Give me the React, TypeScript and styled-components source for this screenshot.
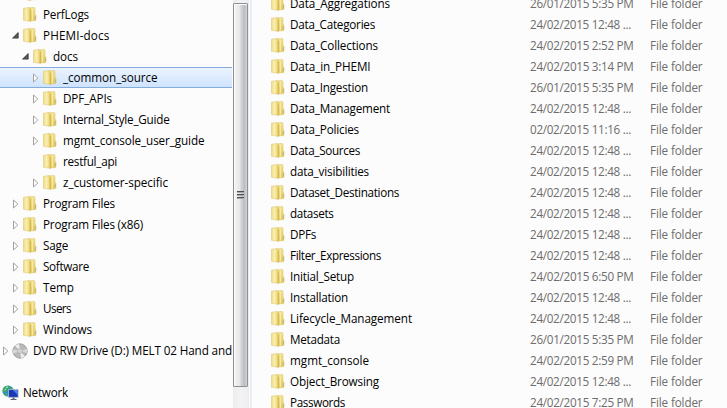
import React, { useLayoutEffect, useRef, useState } from 'react';
import styled, { createGlobalStyle } from 'styled-components';

const Global = createGlobalStyle`
  * { box-sizing: border-box; }
  body { margin: 0; background: #fcfcfc; font-family: "Open Sans", "Noto Sans", sans-serif; font-size: 11.7px; color: #000; }
`;

const Explorer = styled.div`
  display: flex;
  width: 727px;
  height: 408px;
  overflow: hidden;
  background: #fcfcfc;
`;

const Tree = styled.div`
  width: 233px;
  flex: none;
  margin-top: -17px;
  overflow: hidden;
`;

const TreeRow = styled.div<{ $level: number; $selected?: boolean }>`
  display: flex;
  align-items: center;
  height: 21px;
  width: 232px;
  padding-left: ${(p) => p.$level * 10}px;
  white-space: nowrap;
  border-top: 1px solid ${(p) => (p.$selected ? '#84acdd' : 'transparent')};
  border-bottom: 1px solid ${(p) => (p.$selected ? '#84acdd' : 'transparent')};
  background: ${(p) => (p.$selected ? 'linear-gradient(#ebf4fe, #cfe3fd)' : 'transparent')};
`;

const ArrowSlot = styled.span`
  display: flex;
  width: 12px;
  flex: none;
  padding-left: 2px;
`;

const IconSlot = styled.span<{ $inset?: boolean }>`
  display: flex;
  width: 21px;
  flex: none;
  padding-left: ${(p) => (p.$inset ? 1 : 0)}px;
`;

const Spacer = styled.div`
  height: 21px;
`;

const Track = styled.div`
  width: 16px;
  flex: none;
  padding-top: 3px;
  background: linear-gradient(90deg, #ececee, #f3f3f4 50%, #eeeef0);
`;

const Thumb = styled.div`
  display: flex;
  align-items: center;
  justify-content: center;
  width: 15px;
  height: 384px;
  border: 1px solid #8f9094;
  border-radius: 1px;
  box-shadow: inset 1px 1px 0 #fafafa;
  background: linear-gradient(90deg, #f4f4f4 0, #e7e7e9 42%, #cfd0d4 58%, #bdbec4 80%, #d2d3d6 100%);
`;

const Grip = styled.div`
  display: grid;
  gap: 1px;
`;

const GripLine = styled.div`
  width: 7px;
  height: 2px;
  border-top: 1px solid #4b4c50;
  border-bottom: 1px solid #a9aaae;
`;

const Splitter = styled.div`
  width: 3px;
  flex: none;
  border-left: 1px solid #fafbfd;
  border-right: 1px solid #eceff8;
  background: #e6ebf6;
`;

const List = styled.div`
  flex: 1;
  margin-top: -7px;
  padding-left: 18px;
`;

const ListRow = styled.div`
  display: grid;
  grid-template-columns: 20px 240px 120px 1fr;
  align-items: center;
  height: 21px;
  white-space: nowrap;
`;

const ListIcon = styled.span`
  display: flex;
  padding-left: 1px;
`;

const Text = styled.span<{ $muted?: boolean }>`
  display: block;
  justify-self: start;
  line-height: 19px;
  color: ${(p) => (p.$muted ? '#6d6d6d' : '#000')};
`;

/* Tightens or loosens tracking so a label takes the given width. */
function Label({ text, width, muted }: { text: string; width: number; muted?: boolean }) {
  const ref = useRef<HTMLSpanElement>(null);
  const [spacing, setSpacing] = useState(0);
  useLayoutEffect(() => {
    if (ref.current) setSpacing((width - ref.current.getBoundingClientRect().width) / text.length);
  }, [text, width]);
  return (
    <Text ref={ref} $muted={muted} style={{ letterSpacing: spacing }}>
      {text}
    </Text>
  );
}

const Folder = () => (
  <svg width="14" height="15" viewBox="0 0 14 15">
    <defs>
      <linearGradient id="front" x1="0" x2="1">
        <stop offset="0" stopColor="#f0dc82" />
        <stop offset=".45" stopColor="#faf0b4" />
        <stop offset="1" stopColor="#e3c95a" />
      </linearGradient>
      <linearGradient id="back" x1="0" x2="0" y1="0" y2="1">
        <stop offset="0" stopColor="#f3e28c" />
        <stop offset="1" stopColor="#e4ca60" />
      </linearGradient>
    </defs>
    <path d="M5 .9 11.3.5 12 1.2V7.6l1 .6v5l-1.4.5H5z" fill="url(#back)" stroke="#d9c169" strokeWidth=".5" />
    <path d="M9.4 1.6v11.6" stroke="#f6eaa6" strokeWidth="1.2" />
    <path d="M.5 1.3 5.9.6l1.7 1.6v12.4L5.9 14.1.5 13.3z" fill="url(#front)" stroke="#d9c269" strokeWidth=".5" />
    <path d="M7.3 3v11.2" stroke="#cfb044" strokeWidth=".7" />
    <path d="M12.2 9.2v3" stroke="#b5ab8c" strokeWidth=".9" />
  </svg>
);

const Arrow = ({ open }: { open: boolean }) =>
  open ? (
    <svg width="7" height="7" viewBox="0 0 7 7">
      <path d="M6.2 .6V6.1H.6z" fill="#595959" stroke="#303030" strokeWidth=".8" />
    </svg>
  ) : (
    <svg width="7" height="10" viewBox="0 0 7 10">
      <path d="M1.5 1v8L5.8 5z" fill="#fff" stroke="#a2a2a2" />
    </svg>
  );

const Disc = () => (
  <svg width="16" height="16" viewBox="0 0 16 16">
    <circle cx="8" cy="8" r="7.2" fill="#b9b9b9" stroke="#8c8c8c" strokeWidth=".7" />
    <path d="M8 8 3 2.8A7 7 0 0 1 7 1zM8 8l5 5.2A7 7 0 0 1 9 15z" fill="#ededed" />
    <path d="m8 8 6.8-2A7 7 0 0 1 14.8 10zM8 8 1.2 6.5a7 7 0 0 0 .3 4z" fill="#d8d8d8" />
    <circle cx="8" cy="8" r="2.4" fill="#e6e6e6" stroke="#999" strokeWidth=".6" />
    <circle cx="8" cy="8" r="1" fill="#fff" stroke="#888" strokeWidth=".4" />
  </svg>
);

const NetworkIcon = () => (
  <svg width="17" height="16" viewBox="0 0 17 16">
    <circle cx="6" cy="6" r="5.6" fill="#2d8fd0" />
    <path d="M1.5 3Q4 .5 7 .8L8 2 5.5 4 5 6 2 7.5.8 6zM8 2.5l3 .5.5 2-3 .5zM3 8l3 1-1 2.3Q2.8 10.5 2 9z" fill="#43ad4c" />
    <path d="M4 2.5 6 2M2.5 5l1.5-1" stroke="#c9eef8" strokeWidth=".9" />
    <rect x="6.5" y="4.6" width="9.6" height="7.7" fill="#1638b4" stroke="#b3bccb" strokeWidth=".8" />
    <path d="M11 5h4.6v5z" fill="#4c83e5" />
    <path d="M10.5 12.5h2v1.4h2v1.2h-6v-1.2h2z" fill="#59657a" />
  </svg>
);

type Node = {
  name: string;
  width: number;
  level: number;
  arrow?: 'open' | 'closed';
  icon?: 'disc';
  selected?: boolean;
};

const nodes: Node[] = [
  { name: 'PerfLogs', width: 46, level: 1 },
  { name: 'PHEMI-docs', width: 66.5, level: 1, arrow: 'open' },
  { name: 'docs', width: 25, level: 2, arrow: 'open' },
  { name: '_common_source', width: 94.5, level: 3, arrow: 'closed', selected: true },
  { name: 'DPF_APIs', width: 49, level: 3, arrow: 'closed' },
  { name: 'Internal_Style_Guide', width: 106.5, level: 3, arrow: 'closed' },
  { name: 'mgmt_console_user_guide', width: 141.5, level: 3, arrow: 'closed' },
  { name: 'restful_api', width: 54, level: 3 },
  { name: 'z_customer-specific', width: 105, level: 3, arrow: 'closed' },
  { name: 'Program Files', width: 72, level: 1, arrow: 'closed' },
  { name: 'Program Files (x86)', width: 100, level: 1, arrow: 'closed' },
  { name: 'Sage', width: 25, level: 1, arrow: 'closed' },
  { name: 'Software', width: 46, level: 1, arrow: 'closed' },
  { name: 'Temp', width: 31, level: 1, arrow: 'closed' },
  { name: 'Users', width: 28, level: 1, arrow: 'closed' },
  { name: 'Windows', width: 49, level: 1, arrow: 'closed' },
  { name: 'DVD RW Drive (D:) MELT 02 Hand and', width: 199, level: 0, arrow: 'closed', icon: 'disc' },
];

const files: [string, number, string][] = [
  ['Data_Aggregations', 100, '26/01/2015 5:35 PM'],
  ['Data_Categories', 85, '24/02/2015 12:48 ...'],
  ['Data_Collections', 88, '24/02/2015 2:52 PM'],
  ['Data_in_PHEMI', 80.5, '24/02/2015 3:14 PM'],
  ['Data_Ingestion', 78, '26/01/2015 5:35 PM'],
  ['Data_Management', 100, '24/02/2015 12:48 ...'],
  ['Data_Policies', 69, '02/02/2015 11:16 ...'],
  ['Data_Sources', 70, '24/02/2015 12:48 ...'],
  ['data_visibilities', 79, '24/02/2015 12:48 ...'],
  ['Dataset_Destinations', 109, '24/02/2015 12:48 ...'],
  ['datasets', 43.5, '24/02/2015 12:48 ...'],
  ['DPFs', 26, '24/02/2015 12:48 ...'],
  ['Filter_Expressions', 91, '24/02/2015 12:48 ...'],
  ['Initial_Setup', 64, '24/02/2015 6:50 PM'],
  ['Installation', 58, '24/02/2015 12:48 ...'],
  ['Lifecycle_Management', 122, '24/02/2015 12:48 ...'],
  ['Metadata', 50, '26/01/2015 5:35 PM'],
  ['mgmt_console', 79, '24/02/2015 2:59 PM'],
  ['Object_Browsing', 89, '24/02/2015 12:48 ...'],
  ['Passwords', 55, '24/02/2015 7:25 PM'],
];

const NetworkRow = styled.div`
  display: flex;
  align-items: center;
  height: 21px;
  padding-left: 2px;
`;

export default function App() {
  return (
    <>
      <Global />
      <Explorer>
        <Tree>
          <TreeRow $level={1}>
            <ArrowSlot />
            <IconSlot $inset>
              <Folder />
            </IconSlot>
          </TreeRow>
          {nodes.map((n) => (
            <TreeRow key={n.name} $level={n.level} $selected={n.selected}>
              <ArrowSlot>{n.arrow && <Arrow open={n.arrow === 'open'} />}</ArrowSlot>
              <IconSlot $inset={!n.icon}>{n.icon ? <Disc /> : <Folder />}</IconSlot>
              <Label text={n.name} width={n.width} />
            </TreeRow>
          ))}
          <Spacer />
          <NetworkRow>
            <IconSlot>
              <NetworkIcon />
            </IconSlot>
            <Label text="Network" width={45} />
          </NetworkRow>
        </Tree>
        <Track>
          <Thumb>
            <Grip>
              <GripLine />
              <GripLine />
              <GripLine />
            </Grip>
          </Thumb>
        </Track>
        <Splitter />
        <List>
          {files.map(([name, width, date]) => (
            <ListRow key={name}>
              <ListIcon>
                <Folder />
              </ListIcon>
              <Label text={name} width={width} />
              <Label text={date} width={date.endsWith('M') ? 103.5 : 101} muted />
              <Label text="File folder" width={52.5} muted />
            </ListRow>
          ))}
        </List>
      </Explorer>
    </>
  );
}
